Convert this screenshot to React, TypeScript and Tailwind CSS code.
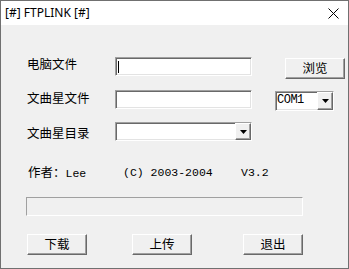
import React from "react";

function Sunken({ className = "", children }: { className?: string; children?: React.ReactNode }) {
  return (
    <div
      className={`border border-t-[#a0a0a0] border-l-[#a0a0a0] border-b-white border-r-white shadow-[inset_1px_1px_0_#696969,inset_-1px_-1px_0_#e3e3e3] bg-white ${className}`}
    >
      {children}
    </div>
  );
}

function Arrow() {
  return (
    <div className="w-[16px] h-full border border-t-white border-l-white border-b-[#696969] border-r-[#696969] shadow-[inset_-1px_-1px_0_#a0a0a0] bg-[#f0f0f0] flex items-center justify-center">
      <svg width="7" height="4" viewBox="0 0 7 4">
        <path d="M0 0 L7 0 L3.5 4 Z" fill="#000" />
      </svg>
    </div>
  );
}

function Btn({ label, className = "" }: { label: string; className?: string }) {
  return (
    <div
      className={`h-[21px] w-[60px] border border-t-white border-l-white border-b-[#696969] border-r-[#696969] shadow-[inset_-1px_-1px_0_#a0a0a0] bg-[#f0f0f0] flex items-center justify-center text-[12.5px] leading-none text-black font-['Noto_Sans_CJK_SC',sans-serif] ${className}`}
    >
      {label}
    </div>
  );
}

export default function App() {
  return (
    <div className="w-[349px] h-[269px] border border-[#707070] bg-[#f0f0f0] flex flex-col overflow-hidden">
      <div className="h-[24px] bg-white flex items-center justify-between pl-[4px] pr-[9px] shrink-0">
        <span className="text-[12px] leading-none text-black font-['Noto_Sans',sans-serif]">[#] FTPLINK [#]</span>
        <svg width="11" height="11" viewBox="0 0 11 11">
          <path d="M0.5 0.5 L10.5 10.5 M10.5 0.5 L0.5 10.5" stroke="#000" strokeWidth="1" />
        </svg>
      </div>
      <div className="pl-[26px] pt-[32px] text-black font-['Noto_Sans_CJK_SC',sans-serif]">
        <div className="flex items-start h-[19px]">
          <div className="w-[88px] text-[12.5px] leading-[19px] -mt-[3px]">电脑文件</div>
          <Sunken className="w-[137px] h-[19px] flex items-center pl-[2px]">
            <div className="w-px h-[12px] bg-black" />
          </Sunken>
          <Btn label="浏览" className="ml-[33px] mt-[1px] w-[38px] h-[20px]" />
        </div>
        <div className="flex items-start h-[19px] mt-[14px]">
          <div className="w-[88px] text-[12.5px] leading-[19px] -mt-[2px]">文曲星文件</div>
          <Sunken className="w-[137px] h-[19px]" />
          <Sunken className="ml-[23px] mt-[1px] w-[59px] h-[20px] flex items-stretch">
            <div className="flex-1 pl-[1px] text-[12px] leading-[16px] font-['Liberation_Mono',monospace] tracking-[-0.5px]">COM1</div>
            <Arrow />
          </Sunken>
        </div>
        <div className="flex items-start h-[19px] mt-[13px]">
          <div className="w-[88px] text-[12.5px] leading-[19px] mt-[1px]">文曲星目录</div>
          <Sunken className="w-[137px] h-[19px] flex justify-end">
            <Arrow />
          </Sunken>
        </div>
        <div className="flex items-center h-[16px] mt-[24px] pl-[1px] text-[11.5px] font-['Liberation_Mono','Noto_Sans_CJK_SC',monospace]">
          <span className="w-[95px]">
            <span className="font-['Noto_Sans_CJK_SC',sans-serif] text-[12.5px]">作者：</span>Lee
          </span>
          <span className="w-[118px]">(C) 2003-2004</span>
          <span>V3.2</span>
        </div>
        <div className="-ml-px mt-[16px] w-[277px] h-[19px] border border-t-[#a0a0a0] border-l-[#a0a0a0] border-b-white border-r-white bg-[#f0f0f0]" />
        <div className="flex mt-[18px]">
          <Btn label="下载" />
          <Btn label="上传" className="ml-[45px]" />
          <Btn label="退出" className="ml-[51px]" />
        </div>
      </div>
    </div>
  );
}
